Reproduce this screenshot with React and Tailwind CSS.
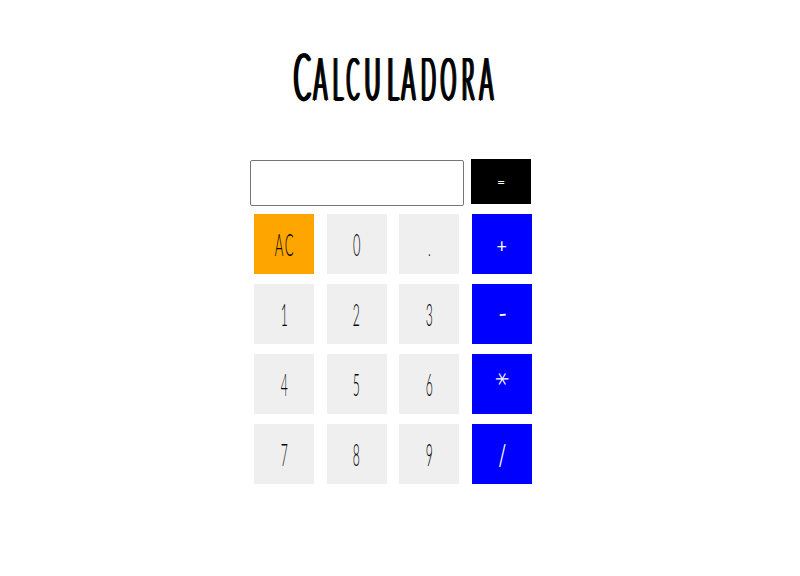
const digit = 'text-[32px] scale-x-[0.38] font-light';

const keys = [
  { label: 'AC', tone: 'bg-[#ffa500] text-black', glyph: 'text-[32px] scale-x-[0.41] translate-x-[1px] font-light tracking-[4px]' },
  { label: '0', glyph: 'text-[32px] scale-x-[0.4] translate-x-[0.5px] font-light' },
  { label: '.', glyph: 'text-[20px] scale-x-[0.6] font-light translate-y-[4px]' },
  { label: '+', tone: 'bg-[#0000ff] text-white', glyph: 'text-[20px] scale-x-[0.9] translate-y-[1px] font-normal' },
  { label: '1', glyph: digit },
  { label: '2', glyph: digit },
  { label: '3', glyph: digit },
  { label: '-', tone: 'bg-[#0000ff] text-white', glyph: 'text-[24px] -rotate-6 font-normal -translate-y-[1px]' },
  { label: '4', glyph: digit },
  { label: '5', glyph: digit },
  { label: '6', glyph: digit },
  { label: '*', tone: 'bg-[#0000ff] text-white', glyph: 'text-[42px] font-light rotate-90 -translate-x-[9px] -translate-y-[5px]' },
  { label: '7', glyph: digit },
  { label: '8', glyph: digit },
  { label: '9', glyph: digit },
  { label: '/', tone: 'bg-[#0000ff] text-white', glyph: 'text-[28px] scale-x-[0.6] font-normal' },
];

const title = [
  { char: 'C', cell: 'w-[20px]', glyph: 'text-[66px] scale-x-[0.38]' },
  { char: 'A', cell: 'w-[16px]', glyph: 'text-[59px] scale-x-[0.35]' },
  { char: 'L', cell: 'w-[20px]', glyph: 'text-[59px] scale-x-[0.34]' },
  { char: 'C', cell: 'w-[10px]', glyph: 'text-[59px] scale-x-[0.32]' },
  { char: 'U', cell: 'w-[28px]', glyph: 'text-[59px] scale-x-[0.36]' },
  { char: 'L', cell: 'w-[13px]', glyph: 'text-[59px] scale-x-[0.37]' },
  { char: 'A', cell: 'w-[18px]', glyph: 'text-[59px] scale-x-[0.35]' },
  { char: 'D', cell: 'w-[22px]', glyph: 'text-[59px] scale-x-[0.33]' },
  { char: 'O', cell: 'w-[18px]', glyph: 'text-[59px] scale-x-[0.33]' },
  { char: 'R', cell: 'w-[21px]', glyph: 'text-[59px] scale-x-[0.34]' },
  { char: 'A', cell: 'w-[16px]', glyph: 'text-[59px] scale-x-[0.35]' },
];

function Key({ label, tone = 'bg-[#efefef] text-black', glyph, size = 'h-[60px]' }) {
  return (
    <button className={`flex w-[60px] items-center justify-center leading-none ${size} ${tone}`}>
      <span className={`inline-block ${glyph}`}>{label}</span>
    </button>
  );
}

export default function App() {
  return (
    <main className="flex h-[576px] w-[800px] flex-col bg-white font-['Lato',sans-serif] text-black">
      <h1 className="ml-[292px] mt-[41px] flex h-[75px] w-[204px] items-baseline whitespace-nowrap font-light leading-[67px] [text-shadow:2px_0_#000,4px_0_#000,-2px_0_#000,-4px_0_#000,0_0.5px_#000,0_-0.5px_#000]">
        {title.map(({ char, cell, glyph }, index) => (
          <span key={index} className={`flex shrink-0 items-baseline justify-center ${cell}`}>
            <span className={`inline-block ${glyph}`}>{char}</span>
          </span>
        ))}
      </h1>
      <section className="ml-[250px] mt-[43px] w-[282px]">
        <div className="flex h-[55px] items-start gap-[7px]">
          <input
            aria-label="Resultado"
            className="mt-px h-[46px] w-[214px] rounded-[2px] border border-[#767676] bg-white outline-none"
          />
          <Key label="=" tone="bg-black text-white" size="h-[45px]" glyph="text-[14px] font-normal" />
        </div>
        <div className="ml-[4px] grid w-[278px] grid-cols-[repeat(4,60px)] justify-between gap-y-[10px]">
          {keys.map((key) => (
            <Key key={key.label} {...key} />
          ))}
        </div>
      </section>
    </main>
  );
}
